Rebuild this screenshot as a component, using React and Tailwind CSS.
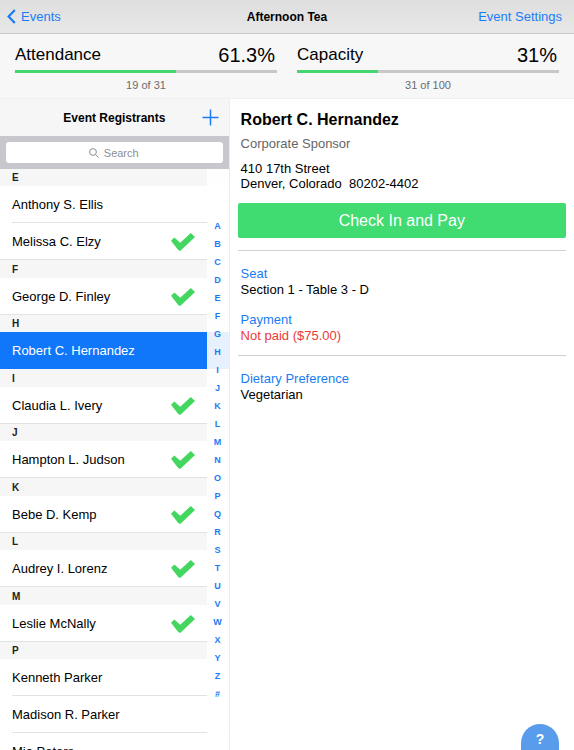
import { Fragment } from "react";

const SECTIONS = [
  { letter: "E", people: [{ name: "Anthony S. Ellis" }, { name: "Melissa C. Elzy", checked: true }] },
  { letter: "F", people: [{ name: "George D. Finley", checked: true }] },
  { letter: "H", people: [{ name: "Robert C. Hernandez", selected: true }] },
  { letter: "I", people: [{ name: "Claudia L. Ivery", checked: true }] },
  { letter: "J", people: [{ name: "Hampton L. Judson", checked: true }] },
  { letter: "K", people: [{ name: "Bebe D. Kemp", checked: true }] },
  { letter: "L", people: [{ name: "Audrey I. Lorenz", checked: true }] },
  { letter: "M", people: [{ name: "Leslie McNally", checked: true }] },
  { letter: "P", people: [{ name: "Kenneth Parker" }, { name: "Madison R. Parker" }, { name: "Mia Peters" }] },
];

const INDEX = [..."ABCDEFGHIJKLMNOPQRSTUVWXYZ#"];

function Check() {
  return (
    <svg width="24" height="18" viewBox="0 0 24 18" fill="#43d75f" role="img" aria-label="Checked in">
      <path d="M0 7.8 L3.4 4.5 L9.2 9.8 L19.8 0 L24 3.9 L9.2 18 L7.2 17 Z" />
    </svg>
  );
}

function Meter({ label, percent, value, max }) {
  return (
    <section className="flex-1">
      <div className="flex items-center justify-between pr-0.5">
        <h2 className="text-[17px] leading-[26px]">{label}</h2>
        <span className="text-[20px] leading-[26px]">{percent}</span>
      </div>
      <div
        className="mt-[2px] h-[3px] bg-[#c8c8c8]"
        role="progressbar"
        aria-label={label}
        aria-valuenow={value}
        aria-valuemax={max}
      >
        <div className="h-full bg-[#44d66f]" style={{ width: `${(value / max) * 100}%` }} />
      </div>
      <p className="mt-1 text-center text-[11px] leading-4 text-[#6b6b6b]">
        {value} of {max}
      </p>
    </section>
  );
}

function Row({ person }) {
  return (
    <li className={person.selected ? "group/row bg-[#1077fa] text-white" : "group/row bg-white"}>
      <button type="button" className="flex h-[37px] w-full pl-3 text-left text-[13px] group-last/row:pl-0">
        <span
          className={
            person.selected
              ? "flex h-full flex-1 items-center pt-px group-last/row:pl-3"
              : "flex h-full flex-1 items-center justify-between border-b border-[#e2e2e4] pt-[2px] pr-[34px] group-last/row:pl-3"
          }
        >
          {person.name}
          {person.checked && <Check />}
        </span>
      </button>
    </li>
  );
}

function Sidebar() {
  return (
    <aside className="flex w-2/5 flex-col border-r border-[#ececec]">
      <div className="relative flex h-[37px] shrink-0 items-center justify-center bg-[#f6f6f6]">
        <h2 className="text-[12px] font-bold">Event Registrants</h2>
        <button type="button" aria-label="Add registrant" className="absolute right-[10px] text-[#1a7cf5]">
          <svg width="17" height="17" viewBox="0 0 17 17" stroke="currentColor" strokeWidth="1.5">
            <path d="M8.5 0.5v16M0.5 8.5h16" />
          </svg>
        </button>
      </div>
      <div className="shrink-0 bg-[#c7c7cd] px-[6px] py-[6px]">
        <label className="flex h-[21px] items-center justify-center gap-[5px] rounded-[3px] bg-white text-[#8e8e93]">
          <svg width="10" height="10" viewBox="0 0 10 10" fill="none" stroke="currentColor">
            <circle cx="4" cy="4" r="3.4" />
            <path d="M6.5 6.5L9.6 9.6" />
          </svg>
          <input
            type="text"
            aria-label="Search"
            placeholder="Search"
            className="w-[36px] text-[11px] leading-4 outline-none placeholder:text-[#8e8e93]"
          />
        </label>
      </div>
      <div className="relative min-h-0 flex-1 overflow-hidden">
        <ul>
          {SECTIONS.map(({ letter, people }) => (
            <li key={letter} className="group">
              <h3 className="flex h-[17px] items-center bg-[#f6f6f6] pl-3 text-[10px] font-bold text-[#222] group-even:h-[18px]">
                {letter}
              </h3>
              <ul>
                {people.map((person) => (
                  <Row key={person.name} person={person} />
                ))}
              </ul>
            </li>
          ))}
        </ul>
        <nav
          aria-label="Alphabet"
          className="absolute inset-y-0 right-0 flex w-[22px] flex-col items-center justify-center bg-white/90 text-[9px] leading-[18px] font-bold text-[#1a7cf5]"
        >
          {INDEX.map((letter) => (
            <a key={letter} href={`#${letter}`}>
              {letter}
            </a>
          ))}
        </nav>
      </div>
    </aside>
  );
}

function Field({ label, value, alert }) {
  return (
    <Fragment>
      <dt className="text-[13px] leading-4 text-[#1a7cf5] not-first:mt-[14px]">{label}</dt>
      <dd className={alert ? "text-[13px] leading-4 text-[#ec3a37]" : "text-[13px] leading-4"}>{value}</dd>
    </Fragment>
  );
}

function Detail() {
  return (
    <article className="flex-1 px-2 pt-3">
      <div className="px-[3px]">
        <h2 className="text-[16px] leading-[18px] font-bold">Robert C. Hernandez</h2>
        <p className="mt-[7px] text-[13px] leading-4 text-[#666]">Corporate Sponsor</p>
        <address className="mt-[9px] text-[13px] leading-[15px] whitespace-pre not-italic">
          {"410 17th Street\nDenver, Colorado  80202-4402"}
        </address>
      </div>
      <button type="button" className="mt-3 h-[35px] w-full rounded-[2px] bg-[#40db71] text-[16px] text-white">
        Check In and Pay
      </button>
      <dl className="mt-3 border-t border-[#d0d0d0] px-[3px] pt-[15px] pb-[11px]">
        <Field label="Seat" value="Section 1 - Table 3 - D" />
        <Field label="Payment" value="Not paid ($75.00)" alert />
      </dl>
      <dl className="border-t border-[#d0d0d0] px-[3px] pt-[15px]">
        <Field label="Dietary Preference" value="Vegetarian" />
      </dl>
    </article>
  );
}

export default function App() {
  return (
    <div className="flex h-screen flex-col overflow-hidden bg-white font-['Helvetica_Neue','Liberation_Sans',Arial,sans-serif] text-black">
      <header className="grid h-[34px] shrink-0 grid-cols-3 items-center border-b border-[#c9c9c9] bg-linear-to-b from-[#dedede] to-[#e8e8e8] text-[13px]">
        <a href="#events" className="flex items-center gap-[5px] pl-[7px] text-[#1a7cf5]">
          <svg width="9" height="15" viewBox="0 0 9 15" fill="none" stroke="currentColor" strokeWidth="2.2">
            <path d="M7.8 0.9L1.6 7.5l6.2 6.6" />
          </svg>
          Events
        </a>
        <h1 className="text-center text-[12px] font-bold">Afternoon Tea</h1>
        <a href="#settings" className="pr-3 text-right text-[#1a7cf5]">
          Event Settings
        </a>
      </header>
      <div className="flex h-[65px] shrink-0 gap-5 border-b border-[#f0f0f0] bg-[#f7f7f7] px-[15px] pt-2">
        <Meter label="Attendance" percent="61.3%" value={19} max={31} />
        <Meter label="Capacity" percent="31%" value={31} max={100} />
      </div>
      <main className="flex min-h-0 flex-1">
        <Sidebar />
        <Detail />
      </main>
      <button
        type="button"
        aria-label="Help"
        className="fixed right-[15px] bottom-0 h-[26px] w-[38px] rounded-t-full bg-[#5a9cec] pt-1 text-[14px] leading-5 font-bold text-white"
      >
        ?
      </button>
    </div>
  );
}
